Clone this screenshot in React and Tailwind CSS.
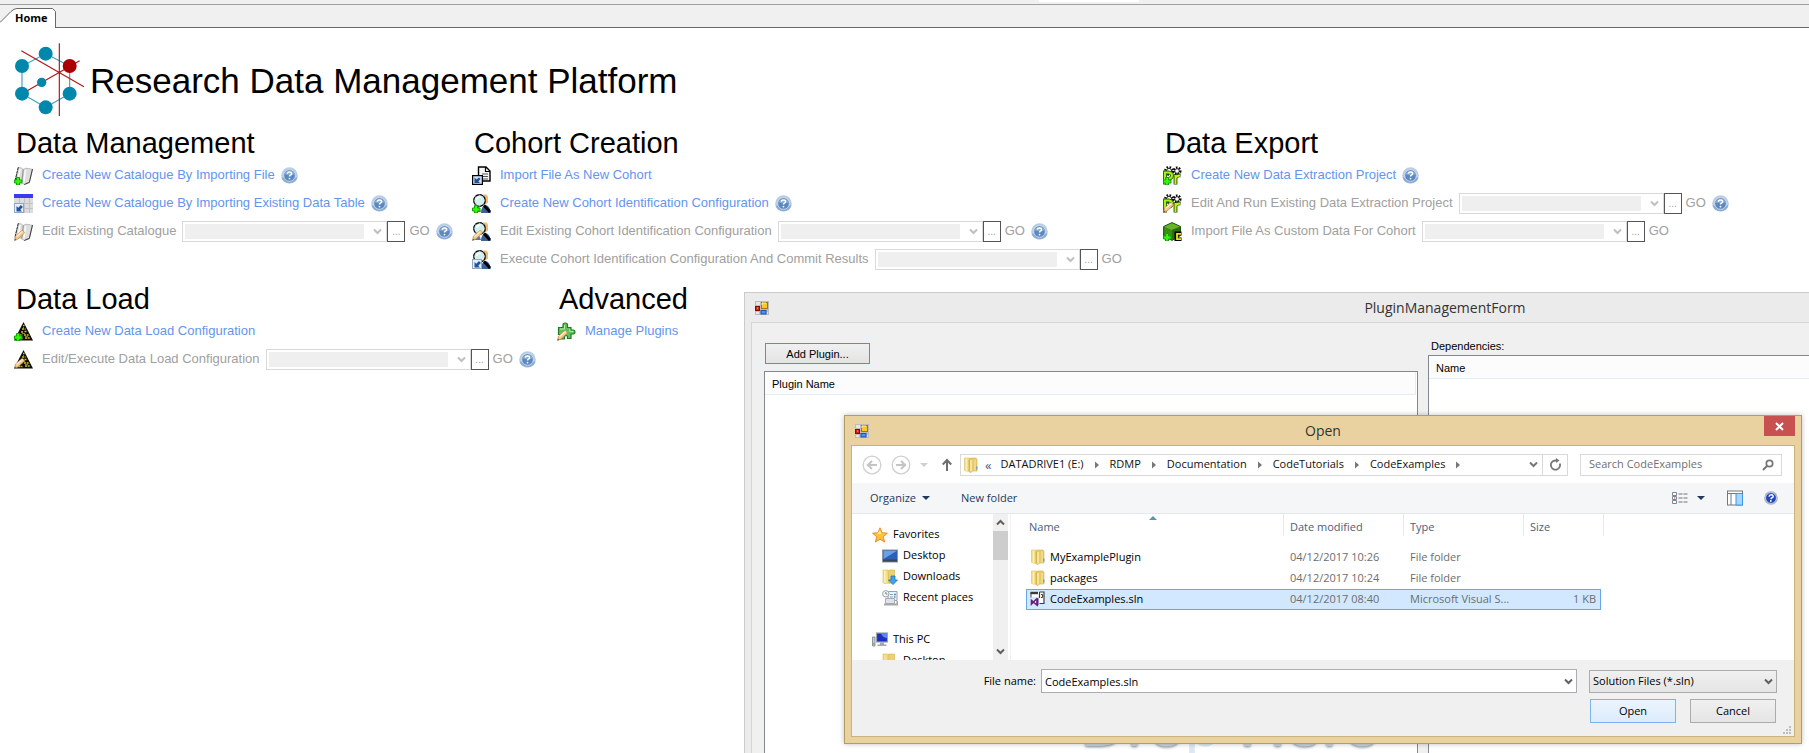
import React from "react";

const uiFont = "font-['Open_Sans','Noto_Sans',sans-serif]";
const formFont = "font-['Liberation_Sans',Arial,sans-serif]";

/* ---------- overlays shared by the home screen icons ---------- */

const Plus = () => (
  <path
    d="M2.500 11.500h3v2.500H8v3H5.500v2h-3v-2H.5v-3h2z"
    fill="#35f50c"
    stroke="#14a00c"
    strokeWidth="1"
  />
);

const Pencil = () => (
  <g>
    <path d="M.5 18.500l1-4.500 6.500-5.500q2 0 2.500 2.500L4 17z" fill="#f3c886" stroke="#c08a50" strokeWidth=".7" />
    <path d="M2.500 14.500l6-5" stroke="#fdf0d4" strokeWidth="1.200" />
    <path d="M.4 18.600l.6-2 1.400 1.300z" fill="#704830" />
  </g>
);

const ImportBox = () => (
  <g>
    <rect x=".5" y="9.500" width="9" height="9" fill="#e8eef6" stroke="#8fa6c4" />
    <path d="M2.500 12v5.500h5.500l-1.700-1.800 2.600-2.600-2-2-2.600 2.600z" fill="#1f559c" />
  </g>
);

const Svg = ({ children, size = 19, box = "0 0 19 19", className = "" }) => (
  <svg width={size} height={size} viewBox={box} fill="none" className={"shrink-0 " + className} aria-hidden="true">
    {children}
  </svg>
);

const Book = () => (
  <g>
    <path d="M1 15.500L4.500 1.500q3-.5 4.500 2 3-2 5-1l4.500 .8-3.200 13.200q-3-.5-4.800 2-3-3-9.500-3z" fill="#dedede" stroke="#9a9a9a" strokeWidth=".6" />
    <path d="M4.300 1.200L1 15" stroke="#2a2a2a" strokeWidth="1" strokeDasharray="3 .6" />
    <path d="M18.500 3l-3.200 13.500-5 2" stroke="#3a3a3a" strokeWidth="1" />
    <path d="M9.300 3.500L7.700 16.500" stroke="#9c9c9c" strokeWidth="1.400" />
    <path d="M11.500 4l-1.700 12.500M6 3L4 15" stroke="#fbfbfb" strokeWidth="1.500" />
  </g>
);

const DataTable = () => (
  <g>
    <rect y="0" width="19" height="19" fill="#dcdcdc" />
    <rect width="19" height="4" fill="#3a3af0" />
    <path d="M0 9.500h19M0 14.500h19M5.500 4v15M10.500 4v15M15.500 4v15" stroke="#c3c3c3" />
    <ImportBox />
  </g>
);

const ImportDoc = () => (
  <g>
    <path d="M6.500 1h7.500l4 4v10H6.500z" fill="#f4f4f4" stroke="#000" strokeWidth="1.400" />
    <path d="M13.500 1v4.500H18" stroke="#000" strokeWidth="1.200" />
    <path d="M10 8h6M10 10.500h6M10 13h6" stroke="#555" />
    <rect x=".6" y="9.600" width="9.800" height="8.800" fill="#cfe0f2" stroke="#000" strokeWidth="1.200" />
    <path d="M2.500 11.500v5.500H8l-1.700-1.800 2.200-2.200-1.500-1.500-2.500 2z" fill="#1f4f96" />
  </g>
);

const CohortLens = () => (
  <g>
    <path d="M11 .5h3.500l1.500 2v6l-3 2z" fill="#f2b878" />
    <path d="M9 19q0-7 5-8 4 1 4.800 8z" fill="#3d6396" />
    <path d="M2 18q1-5 5-5l2 5z" fill="#5078ab" />
    <circle cx="7.500" cy="6.500" r="5.800" fill="#d3efec" stroke="#0a0a0a" strokeWidth="1.300" strokeDasharray="4 .4" />
    <path d="M4.500 5.500q1.500-2.500 4-2.500" stroke="#fff" strokeWidth="1.600" />
    <path d="M12 11.500l6 6.500" stroke="#000" strokeWidth="2.800" />
  </g>
);

const ProjectGears = () => (
  <g>
    <circle cx="6" cy="5" r="3.800" fill="#fff" stroke="#000" strokeWidth="2.200" strokeDasharray="1.600 1.400" />
    <circle cx="14" cy="5" r="3.400" fill="#fff" stroke="#000" strokeWidth="2.200" strokeDasharray="1.600 1.300" />
    <circle cx="6" cy="5" r="2.600" stroke="#000" strokeWidth=".8" />
    <circle cx="14" cy="5" r="2.300" stroke="#000" strokeWidth=".8" />
    <path d="M2 18.500V6.500h4Q9 7 9 9.500T5.500 13" stroke="#1c5a08" strokeWidth="3.800" />
    <path d="M2 18V6.500h4Q9 7 9 9.500T5.500 13" stroke="#a6f20e" strokeWidth="2" />
    <path d="M12.500 18.500V8.500M12.500 12q1-3 5-2.500" stroke="#1c4a08" strokeWidth="3.800" />
    <path d="M12.500 18V9M12.500 12q1-2.500 4.500-2.500" stroke="#c8f01a" strokeWidth="2" />
  </g>
);

const CustomCube = () => (
  <g>
    <path d="M.6 4.500L9 .6l8.500 3.900v9L9 18.400.6 14z" fill="#3d8c16" stroke="#1d4f08" />
    <path d="M1.200 4.800L9 8l8-3.200L9 1.200z" fill="#66b52c" />
    <path d="M9 8v10l8-4.500V4.800z" fill="#2b6e0e" />
    <path d="M18.500 11.500h-5v6h5" stroke="#000" strokeWidth="4" />
    <path d="M18 11.800h-4v5.400h4" stroke="#f2e21a" strokeWidth="1.800" />
  </g>
);

const LoadPyramid = () => (
  <g>
    <path d="M9.500 0L19 18.500H0z" fill="#0d0d06" />
    <path
      d="M9 3.500h1.500M8 7h3.500M7 10h2M10.500 9.500h2M5.500 13h3M10 13h4M4.500 16.500h4M11 16h5"
      stroke="#c9c02c"
      strokeWidth="1.600"
      strokeDasharray="2 .7"
    />
    <path d="M9.500 5v1M8 11.500h3M11 14.600h3M14 12l1 2" stroke="#8d8520" strokeWidth="1" />
  </g>
);

const PuzzlePiece = () => (
  <g>
    <path
      d="M1.500 5.500H6V2.500q0-1.500 2.200-1.500t2.300 1.500v3H14V8h2.500q1.500 0 1.500 2t-1.500 2H14v4.500h-3.500v-2q0-1-1.500-1T7.500 15v2h-4v-4.500h-2z"
      fill="#5dc25a"
      stroke="#217a24"
      strokeWidth="1.200"
    />
    <path d="M3 7h4.500V3M12.800 7v2.500h3.500" stroke="#b4ecae" />
  </g>
);

const homeIcons = {
  bookPlus: <Svg><Book /><Plus /></Svg>,
  bookEdit: <Svg><Book /><Pencil /></Svg>,
  table: <Svg><DataTable /></Svg>,
  importDoc: <Svg><ImportDoc /></Svg>,
  lensPlus: <Svg><CohortLens /><Plus /></Svg>,
  lensEdit: <Svg><CohortLens /><Pencil /></Svg>,
  lensImport: <Svg><CohortLens /><ImportBox /></Svg>,
  gearsPlus: <Svg><ProjectGears /><Plus /></Svg>,
  gearsEdit: <Svg><ProjectGears /><Pencil /></Svg>,
  cube: <Svg><CustomCube /><Plus /></Svg>,
  pyramidPlus: <Svg><LoadPyramid /><Plus /></Svg>,
  pyramidEdit: <Svg><LoadPyramid /><Pencil /></Svg>,
  puzzle: <Svg><PuzzlePiece /><Pencil /></Svg>,
};

const HelpIcon = () => (
  <Svg size={17} box="0 0 17 17">
    <circle cx="8.500" cy="8.500" r="8.300" fill="#b9cde6" />
    <path d="M.5 10a8.300 8.300 0 0 0 16 0q-8 4-16 0z" fill="#8aaad2" />
    <circle cx="8.500" cy="8.500" r="5.800" fill="#5b88be" stroke="#d5e2f1" strokeWidth=".8" />
    <path d="M3.500 7.500a5.200 5.200 0 0 1 10 0q-5 1.500-10 0z" fill="#84a8d4" />
    <path d="M6.400 6.800q0-1.800 2.100-1.800t2.100 1.700q0 .9-1.200 1.400-.9.400-.9 1.300" stroke="#fff" strokeWidth="1.500" />
    <circle cx="8.500" cy="11.600" r=".9" fill="#fff" />
  </Svg>
);

const Chevron = ({ color = "#5f5f5f" }) => (
  <Svg size={9} box="0 0 9 9">
    <path d="M1 2.500l3.500 3.500L8 2.500" stroke={color} strokeWidth="2" />
  </Svg>
);

const Logo = () => (
  <svg width="72" height="74" viewBox="42 129 216 222" fill="none" className="shrink-0" aria-hidden="true">
    <path d="M137 161L66 198v83l71 41 72-41v-83z" stroke="#3fa3bd" strokeWidth="3.500" />
    <path d="M64 152l188 108M178 130v218M66 281l173-99" stroke="#b01818" strokeWidth="3.500" />
    {[[137, 161], [66, 198], [66, 281], [209, 281], [137, 322]].map(([x, y]) => (
      <circle key={x + "-" + y} cx={x} cy={y} r="21" fill="#0088ac" />
    ))}
    <circle cx="125" cy="247" r="14" fill="#0088ac" />
    <circle cx="209" cy="198" r="21" fill="#ac0000" />
  </svg>
);

/* ---------- home screen ---------- */

function CommandRow({ icon, text, help, picker, id }) {
  return (
    <li className="flex h-7 items-center text-[13px]">
      {homeIcons[icon]}
      {picker ? (
        <>
          <label htmlFor={id} className="ml-[9px] whitespace-nowrap text-[#a0a0a0]">{text}</label>
          <div className="ml-[6px] flex h-[21px] w-[205px] items-center border border-[#d9d9d9] bg-white p-[2px]">
            <select id={id} disabled className="h-full flex-1 appearance-none bg-[#efefef]" />
            <span className="flex w-5 justify-end pr-[2px]"><Chevron color="#bfbfbf" /></span>
          </div>
          <button disabled aria-label={"Browse: " + text} className="flex h-[21px] w-[18px] items-center justify-center border border-[#555] bg-white text-[10px] text-[#a0a0a0]">
            ...
          </button>
          <button disabled className="ml-1 text-[#a0a0a0]">GO</button>
        </>
      ) : (
        <a href="#" className="ml-[9px] whitespace-nowrap text-[#6495ed]">{text}</a>
      )}
      {help && (
        <button aria-label={"Help: " + text} className="ml-[6px]"><HelpIcon /></button>
      )}
    </li>
  );
}

function Group({ title, rows, className = "" }) {
  return (
    <section className={"shrink-0 " + className}>
      <h2 className="pl-[2px] text-[29px] leading-9 text-black">{title}</h2>
      <ul>
        {rows.map((row, i) => (
          <CommandRow key={row.text} id={title.replace(" ", "-") + i} {...row} />
        ))}
      </ul>
    </section>
  );
}

function Home() {
  return (
    <main className={"px-[14px] pt-[15px] " + formFont}>
      <header className="flex items-center gap-1">
        <Logo />
        <h1 className="pt-[2px] text-[35px] leading-10 whitespace-nowrap text-black">Research Data Management Platform</h1>
      </header>
      <div className="mt-2 flex">
        <Group
          title="Data Management"
          className="w-[458px]"
          rows={[
            { icon: "bookPlus", text: "Create New Catalogue By Importing File", help: true },
            { icon: "table", text: "Create New Catalogue By Importing Existing Data Table", help: true },
            { icon: "bookEdit", text: "Edit Existing Catalogue", picker: true, help: true },
          ]}
        />
        <Group
          title="Cohort Creation"
          className="w-[691px]"
          rows={[
            { icon: "importDoc", text: "Import File As New Cohort" },
            { icon: "lensPlus", text: "Create New Cohort Identification Configuration", help: true },
            { icon: "lensEdit", text: "Edit Existing Cohort Identification Configuration", picker: true, help: true },
            { icon: "lensImport", text: "Execute Cohort Identification Configuration And Commit Results", picker: true },
          ]}
        />
        <Group
          title="Data Export"
          rows={[
            { icon: "gearsPlus", text: "Create New Data Extraction Project", help: true },
            { icon: "gearsEdit", text: "Edit And Run Existing Data Extraction Project", picker: true, help: true },
            { icon: "cube", text: "Import File As Custom Data For Cohort", picker: true },
          ]}
        />
      </div>
      <div className="mt-2 flex">
        <Group
          title="Data Load"
          className="w-[543px]"
          rows={[
            { icon: "pyramidPlus", text: "Create New Data Load Configuration" },
            { icon: "pyramidEdit", text: "Edit/Execute Data Load Configuration", picker: true, help: true },
          ]}
        />
        <Group title="Advanced" rows={[{ icon: "puzzle", text: "Manage Plugins" }]} />
      </div>
    </main>
  );
}

function TabStrip() {
  return (
    <div className="border-b border-[#696969] bg-[#f0f0f0]">
      <div className="h-[5px] border-b border-[#a0a0a0] pl-[1039px]">
        <div className="h-[2px] w-[100px] bg-white" />
      </div>
      <div className="flex h-[22px] items-end">
        <button className={"relative -mb-px h-5 w-14 pl-[15px] text-left text-[11px] leading-5 font-bold text-black " + uiFont}>
          <svg width="56" height="20" viewBox="0 0 56 20" className="absolute inset-0" fill="none" aria-hidden="true">
            <path d="M0 14.500L11 3.500Q14 .5 17 .5h35.500l3 3V20H0z" fill="#fff" />
            <path d="M0 14.500L11 3.500Q14 .5 17 .5h35.500l3 3V20" stroke="#696969" />
          </svg>
          <span className="relative">Home</span>
        </button>
      </div>
    </div>
  );
}

/* ---------- windows ---------- */

const FormIcon = () => (
  <Svg size={14} box="0 0 14 14">
    <path d="M0 0h14v14H0z" fill="#bcbcbc" />
    <path d="M1 1h4v3H1zM1 11h3v2H1zM12 11h1v2h-1z" fill="#e6e6e6" />
    <rect x="6.500" y="1.500" width="6" height="6" fill="#fcc52c" stroke="#a87408" />
    <path d="M7 4V2h4" stroke="#fff2b0" />
    <rect x=".5" y="5.500" width="4" height="4" fill="#d8231a" stroke="#7c0f0a" />
    <rect x="6" y="9.500" width="5" height="3.500" fill="#4b90f2" stroke="#1d50b0" />
    <rect x="2" y="6.500" width="1.200" height="1.200" fill="#f8a094" />
  </Svg>
);

const Folder = () => (
  <Svg size={16} box="0 0 16 16">
    <path d="M1.500 1h5l1 1.500V14.500l-4.500-.5-1.500-.7z" fill="#f1dc86" stroke="#dcc05c" strokeWidth=".6" />
    <path d="M6 3.500L7.500 1H13l1 1.500V14H10l-3 1.800z" fill="#e8ca68" stroke="#d3b24c" strokeWidth=".6" />
    <path d="M3.500 1.500v12.500M8 3v11.500" stroke="#fbf1bd" strokeWidth="1.400" />
    <path d="M6.200 2.500v12" stroke="#cfae46" strokeWidth="1" />
    <path d="M12 2.500v11" stroke="#f4e09a" strokeWidth="1.400" />
    <path d="M13.800 9.500v3" stroke="#4f9de0" strokeWidth="1.200" />
  </Svg>
);

const Star = () => (
  <Svg size={16} box="0 0 16 16">
    <path d="M8 .8l2.100 5 5.300.4-4.100 3.500 1.300 5.300L8 12.200 3.400 15l1.300-5.300L.6 6.200l5.300-.4z" fill="#fdc33c" stroke="#ea8a2c" />
    <path d="M8 3l1 3.500 3 .5H5z" fill="#ffe89a" />
  </Svg>
);

const DesktopIcon = () => (
  <Svg size={16} box="0 0 16 16">
    <rect x=".5" y="2" width="15" height="12" fill="#2b5fb8" stroke="#8b97a8" />
    <path d="M1.500 3h13L1.500 11z" fill="#6aa0e8" />
    <path d="M1 12.500h14" stroke="#3a4656" strokeWidth="2" />
  </Svg>
);

const DownloadsIcon = () => (
  <Svg size={16} box="0 0 16 16">
    <path d="M1 1h5l1 1.500V14l-5 .6-1-1.200z" fill="#f3df8c" stroke="#d9bb55" strokeWidth=".6" />
    <path d="M6 2.500L7 1h5.500v12L7 14.500z" fill="#ecd074" stroke="#d3b24c" strokeWidth=".6" />
    <path d="M2.800 1.500v12.500" stroke="#fbf1bd" strokeWidth="1.400" />
    <path d="M9 7h4v4h2.500L11 15.600 6.500 11H9z" fill="#3fa4ec" stroke="#1a70b4" strokeWidth=".8" />
  </Svg>
);

const RecentIcon = () => (
  <Svg size={16} box="0 0 16 16">
    <path d="M6 1.500h9v9H6z" fill="#eef2f5" stroke="#9aa4ad" />
    <path d="M8 4.500h3M8 7h3" stroke="#8aa" />
    <path d="M12 4.500h2M12 7h1.500" stroke="#3f93e0" strokeWidth="1.500" />
    <path d="M3.500 8.500h9v5h-9z" fill="#dde3e8" stroke="#a4adb5" />
    <path d="M2 14.500h13.500V11" stroke="#a7a7a7" strokeWidth="2.200" />
    <circle cx="3.800" cy="3.800" r="3.200" fill="#f4f8fb" stroke="#93a2b0" />
    <path d="M3.800 2v2h1.700" stroke="#567" strokeWidth=".8" />
  </Svg>
);

const PcIcon = () => (
  <Svg size={16} box="0 0 16 16">
    <path d="M.5 5h2.500v9H.5z" fill="#c8ccd0" stroke="#7b8288" strokeWidth=".8" />
    <rect x="4.500" y="1" width="11" height="9" fill="#1b2fc0" stroke="#9aa3ab" strokeWidth="1.200" />
    <path d="M9 1.600h6v4.500q-4 0-6-4.500z" fill="#5f86ee" />
    <path d="M8 10.500h4v2h2.500v1.500h-9v-1.500H8z" fill="#a2a8ad" />
    <path d="M1.800 11v1.500" stroke="#35c24a" strokeWidth="1.200" />
  </Svg>
);

const PcDesktopIcon = () => (
  <Svg size={16} box="0 0 16 16">
    <path d="M1 1h5l1 1.500V15H1z" fill="#f3df8c" stroke="#d9bb55" strokeWidth=".6" />
    <path d="M6 2.500L7 1h5.500v14H6z" fill="#ecd074" stroke="#d3b24c" strokeWidth=".6" />
    <path d="M7 7.500h8.500V15H7z" fill="#2b5fb8" stroke="#8b97a8" />
  </Svg>
);

const SolutionIcon = () => (
  <Svg size={16} box="0 0 16 16">
    <path d="M1 1h13.500v12H9V6H1z" fill="#fff" />
    <path d="M1 6.500V1.500" stroke="#4a4a4a" />
    <path d="M.5.800h7.500v2.400H.5z" fill="#3a3a3a" />
    <path d="M9.500 1H14v11.500H9.500M9.500 1v6" stroke="#3a3a3a" strokeWidth="1.200" />
    <path d="M11 3.500h1.500v3H11" stroke="#3a3a3a" />
    <path d="M7 7.500v6.500L1.500 9.500v3.500L7 7.500" fill="#fff" stroke="#68217a" strokeWidth="1.600" />
    <path d="M6.800 6.800l1.700.8v6.500l-1.700.8z" fill="#68217a" />
  </Svg>
);

const NavCircle = ({ flip }) => (
  <Svg size={20} box="0 0 20 20">
    <circle cx="10" cy="10" r="8.800" stroke="#cfcfcf" strokeWidth="1.300" />
    <path d={flip ? "M5 10h9M10 6l4.200 4-4.200 4" : "M15 10H6M10 6l-4.200 4 4.200 4"} stroke="#c4c4c4" strokeWidth="2" />
  </Svg>
);

const Caret = ({ color }) => (
  <Svg size={8} box="0 0 8 8">
    <path d="M0 2h8L4 6z" fill={color} />
  </Svg>
);

const Crumb = () => (
  <Svg size={8} box="0 0 8 8">
    <path d="M2 .5L6 4 2 7.500z" fill="#777" />
  </Svg>
);

function PluginWindow() {
  return (
    <section
      aria-label="PluginManagementForm"
      className={"absolute top-[292px] left-[744px] flex h-[600px] w-[1402px] flex-col border border-[#cbcbcb] bg-[#ebebeb] px-[6px] pb-[6px] " + formFont}
    >
      <div className="flex h-[29px] items-center pl-1">
        <FormIcon />
        <h2 className={"flex-1 pr-[18px] text-center text-[14px] text-[#333] " + uiFont}>PluginManagementForm</h2>
      </div>
      <div className="flex flex-1 border border-[#d5d5d5] bg-[#f0f0f0] pl-3 text-[11px] text-black">
        <div className="flex w-[654px] flex-col pt-5">
          <button className="ml-px h-[21px] w-[105px] border border-[#3399ff] bg-linear-to-b from-[#f0f0f0] to-[#e4e4e4] pt-px">
            Add Plugin...
          </button>
          <div className="relative mt-[7px] flex-1 overflow-hidden border border-[#828790] bg-white">
            <div className="mr-px h-[23px] border-r border-b border-[#e3edfa] bg-[#fcfcfc] pl-[7px] leading-6">Plugin Name</div>
            <div className="absolute top-[316px] left-[315px] text-[65px] leading-[72px] whitespace-nowrap text-[#c9d3dd] [text-shadow:0_1px_3px_#7d8894]">
              Dro<span className="text-[#dce8f5] [text-shadow:none]">p</span> Here
            </div>
          </div>
        </div>
        <div className="ml-[10px] flex flex-1 flex-col pt-4">
          <div className="h-4 pl-[3px] leading-[14px]">Dependencies:</div>
          <div className="flex-1 border border-[#828790] bg-white">
            <div className="h-[23px] border-b border-[#e3edfa] bg-[#fcfcfc] pl-[7px] leading-6">Name</div>
          </div>
        </div>
      </div>
    </section>
  );
}

const treeItems = [
  { id: "favorites", icon: <Star />, text: "Favorites" },
  { id: "fav-desktop", icon: <DesktopIcon />, text: "Desktop", nested: true },
  { id: "downloads", icon: <DownloadsIcon />, text: "Downloads", nested: true },
  { id: "recent", icon: <RecentIcon />, text: "Recent places", nested: true },
  { id: "pc", icon: <PcIcon />, text: "This PC", gap: true },
  { id: "pc-desktop", icon: <PcDesktopIcon />, text: "Desktop", nested: true },
];

const files = [
  { icon: <Folder />, name: "MyExamplePlugin", date: "04/12/2017 10:26", type: "File folder", size: "" },
  { icon: <Folder />, name: "packages", date: "04/12/2017 10:24", type: "File folder", size: "" },
  { icon: <SolutionIcon />, name: "CodeExamples.sln", date: "04/12/2017 08:40", type: "Microsoft Visual S...", size: "1 KB", selected: true },
];

function AddressBar() {
  return (
    <div className="flex h-[37px] items-center bg-white pr-3 pl-[10px]">
      <button aria-label="Back"><NavCircle /></button>
      <button aria-label="Forward" className="ml-[9px]"><NavCircle flip /></button>
      <button aria-label="Recent locations" className="ml-[9px]"><Caret color="#cfcfcf" /></button>
      <button aria-label="Up" className="ml-3">
        <Svg size={14} box="0 0 14 14">
          <path d="M7 13V2.500M2.800 6.500L7 2l4.200 4.500" stroke="#6d6d6d" strokeWidth="2" />
        </Svg>
      </button>
      <nav className="ml-[6px] flex h-[22px] flex-1 items-center border border-[#d9d9d9] pl-[2px] text-[#111]">
        <Folder />
        <span className="ml-[6px] text-[13px] leading-4 text-[#555]">«</span>
        {["DATADRIVE1 (E:)", "RDMP", "Documentation", "CodeTutorials", "CodeExamples"].map((part) => (
          <React.Fragment key={part}>
            <a href="#" className="ml-[9px] whitespace-nowrap">{part}</a>
            <span className="ml-[9px]"><Crumb /></span>
          </React.Fragment>
        ))}
        <button aria-label="Previous locations" className="mr-1 ml-auto"><Chevron color="#777" /></button>
        <button aria-label="Refresh" className="flex h-full w-[25px] items-center justify-center border-l border-[#d9d9d9]">
          <Svg size={13} box="0 0 13 13">
            <path d="M10.800 5.500A4.600 4.600 0 1 1 6 2.500h2" stroke="#777" strokeWidth="1.800" />
            <path d="M7 0l3.500 2.500L7 5z" fill="#777" />
          </Svg>
        </button>
      </nav>
      <div className="ml-3 flex h-[22px] w-[202px] items-center border border-[#d9d9d9] pr-[7px] pl-2">
        <input aria-label="Search CodeExamples" placeholder="Search CodeExamples" className="w-full bg-transparent outline-none placeholder:text-[#707070]" />
        <Svg size={12} box="0 0 12 12">
          <circle cx="7.500" cy="4.500" r="3.200" stroke="#777" strokeWidth="1.700" />
          <path d="M5.200 6.800L1 11" stroke="#777" strokeWidth="2" />
        </Svg>
      </div>
    </div>
  );
}

function Toolbar() {
  return (
    <div className="flex h-[31px] items-center border-b border-[#e4e8ec] bg-[#f5f6f7] pr-4 pl-[18px] text-[#1e395b]">
      <button className="flex items-center gap-[6px]">Organize <Caret color="#1e395b" /></button>
      <button className="ml-[31px]">New folder</button>
      <button aria-label="View options" className="ml-auto flex items-center gap-[9px]">
        <Svg size={16} box="0 0 16 16">
          <path d="M.5 2.500h4v3h-4zM.5 6.500h4v3h-4zM.5 10.500h4v3h-4z" fill="#fff" stroke="#7b8794" />
          <path d="M2 8h1.200" stroke="#e02020" strokeWidth="1.200" />
          <path d="M6.500 4h4M11.500 4h4M6.500 8h4M11.500 8h4M6.500 12h4M11.500 12h4" stroke="#6a7480" strokeWidth="1.200" />
        </Svg>
        <Caret color="#1e395b" />
      </button>
      <button aria-label="Preview pane" className="ml-[22px]">
        <Svg size={16} box="0 0 16 16">
          <rect x=".5" y="1" width="15" height="14" fill="#fff" stroke="#777" />
          <path d="M1 3.500h14M4 4v11" stroke="#777" />
          <rect x="9" y="3.500" width="6.500" height="11.500" fill="#a6d5ff" stroke="#3b97e8" />
        </Svg>
      </button>
      <button aria-label="Help" className="ml-[21px]">
        <Svg size={14} box="0 0 14 14">
          <circle cx="7" cy="7" r="6.800" fill="#a9adb5" />
          <circle cx="7" cy="7" r="5.400" fill="#1f45b8" stroke="#e3e8f2" strokeWidth=".7" />
          <path d="M5 5.600q.3-1.900 2.200-1.900T9.200 5.400q0 .9-1.200 1.400-.9.400-1 1.400" stroke="#fff" strokeWidth="1.500" />
          <circle cx="6.800" cy="10" r=".9" fill="#fff" />
        </Svg>
      </button>
    </div>
  );
}

function FolderTree() {
  return (
    <div className="flex w-[159px] shrink-0 overflow-hidden border-r border-[#f0f2f4] bg-white">
      <ul className="flex-1 pt-[10px]">
        {treeItems.map((item) => (
          <li
            key={item.id}
            className={"flex h-[21px] items-center gap-[5px] whitespace-nowrap text-black " + (item.nested ? "pl-[30px]" : "pl-5") + (item.gap ? " mt-[21px]" : "")}
          >
            {item.icon}
            {item.text}
          </li>
        ))}
      </ul>
      <div className="mr-[2px] flex w-[15px] flex-col items-center bg-[#f0f0f0]">
        <span className="flex h-[17px] items-center"><Svg size={9} box="0 0 9 9"><path d="M1 6.500L4.500 3 8 6.500" stroke="#5f5f5f" strokeWidth="2" /></Svg></span>
        <span className="h-[29px] w-full bg-[#cdcdcd]" />
        <span className="mt-auto flex h-[17px] items-center"><Chevron /></span>
      </div>
    </div>
  );
}

function FileList() {
  const head = "border-r border-[#e1ebf5] pt-[5px] pb-0 text-left font-normal text-[#4c607a] ";
  return (
    <div className="relative min-w-0 flex-1 bg-white pl-[15px]">
      <table className="w-[578px] table-fixed border-separate border-spacing-0">
        <colgroup>
          <col className="w-[258px]" />
          <col className="w-[120px]" />
          <col className="w-[120px]" />
          <col className="w-[77px]" />
          <col className="w-[3px]" />
        </colgroup>
        <thead>
          <tr className="h-[21px]">
            <th className={head + "pl-[3px]"}>Name</th>
            <th className={head + "pl-[6px]"}>Date modified</th>
            <th className={head + "pl-[6px]"}>Type</th>
            <th colSpan="2" className={head + "pl-[6px]"}>Size</th>
          </tr>
        </thead>
        <tbody className="before:block before:h-[11px] before:content-['']">
          {files.map((f) => {
            const edge = f.selected ? "border-y border-[#66a7e8] bg-[#d1e8ff] " : "border-y border-transparent ";
            return (
              <tr key={f.name} className="h-[21px] text-[#6d6d6d]">
                <td className={edge + "p-0 " + (f.selected ? "border-l" : "pl-px")}>
                  <span className="flex h-[19px] items-center gap-1 pl-[3px] text-black">{f.icon}{f.name}</span>
                </td>
                <td className={edge + "p-0 pl-[6px]"}>{f.date}</td>
                <td className={edge + "p-0 pl-[6px] whitespace-nowrap"}>{f.type}</td>
                <td className={edge + "p-0 pr-1 text-right " + (f.selected ? "border-r" : "")}>{f.size}</td>
                <td className="p-0" />
              </tr>
            );
          })}
        </tbody>
      </table>
      <svg width="8" height="4" viewBox="0 0 8 4" className="absolute top-[2px] left-[138px]" aria-hidden="true">
        <path d="M0 4l4-4 4 4z" fill="#5b93b5" />
      </svg>
    </div>
  );
}

function OpenDialog() {
  return (
    <section
      role="dialog"
      aria-label="Open"
      className={"absolute top-[415px] left-[844px] w-[958px] border border-[#b39c68] bg-[#ead2a0] px-[6px] pb-[6px] text-[11px] shadow-[0_0_5px_rgba(0,0,0,0.25)] " + uiFont}
    >
      <div className="relative flex h-[29px] items-center pl-1">
        <FormIcon />
        <h2 className="flex-1 pr-[18px] text-center text-[14px] text-[#333]">Open</h2>
        <button aria-label="Close" className="absolute top-0 right-0 flex h-5 w-[31px] items-center justify-center bg-[#c75050]">
          <Svg size={9} box="0 0 9 9"><path d="M1 1l7 7M8 1L1 8" stroke="#fff" strokeWidth="2" /></Svg>
        </button>
      </div>
      <div className="border border-[#c9b27c] bg-[#f0f0f0]">
        <AddressBar />
        <Toolbar />
        <div className="flex h-[146px] overflow-hidden">
          <FolderTree />
          <FileList />
        </div>
        <form className="relative flex h-[76px] flex-col pt-[9px] pr-[17px] text-black" onSubmit={(e) => e.preventDefault()}>
          <div className="flex items-center">
            <label htmlFor="file-name" className="w-[184px] text-right">File name:</label>
            <div className="ml-[5px] flex h-6 flex-1 items-center border border-[#abadb3] bg-white pr-[3px] pl-[3px]">
              <input id="file-name" defaultValue="CodeExamples.sln" className="h-full min-w-0 flex-1 bg-transparent outline-none" />
              <button type="button" aria-label="Previous file names"><Chevron /></button>
            </div>
            <div className="relative ml-3 flex h-[23px] w-[188px] items-center">
              <select aria-label="File type" className="h-full w-full appearance-none border border-[#acacac] bg-linear-to-b from-[#f0f0f0] to-[#e5e5e5] pl-[3px]">
                <option>Solution Files (*.sln)</option>
              </select>
              <span className="pointer-events-none absolute right-1"><Chevron /></span>
            </div>
          </div>
          <div className="mt-[6px] flex justify-end gap-[14px] pr-px">
            <button type="submit" className="h-6 w-[86px] border border-[#7eb4ea] bg-linear-to-b from-[#ecf4fc] to-[#dcecfc]">Open</button>
            <button type="button" className="h-6 w-[86px] border border-[#acacac] bg-linear-to-b from-[#f0f0f0] to-[#e5e5e5]">Cancel</button>
          </div>
          <svg width="8" height="8" viewBox="0 0 8 8" className="absolute right-[3px] bottom-[2px]" aria-hidden="true">
            <path d="M6 0h2v2H6zM3 3h2v2H3zM6 3h2v2H6zM0 6h2v2H0zM3 6h2v2H3zM6 6h2v2H6z" fill="#bdbdbd" />
          </svg>
        </form>
      </div>
    </section>
  );
}

export default function App() {
  return (
    <div className="relative min-h-screen overflow-hidden bg-white">
      <TabStrip />
      <Home />
      <PluginWindow />
      <OpenDialog />
    </div>
  );
}
